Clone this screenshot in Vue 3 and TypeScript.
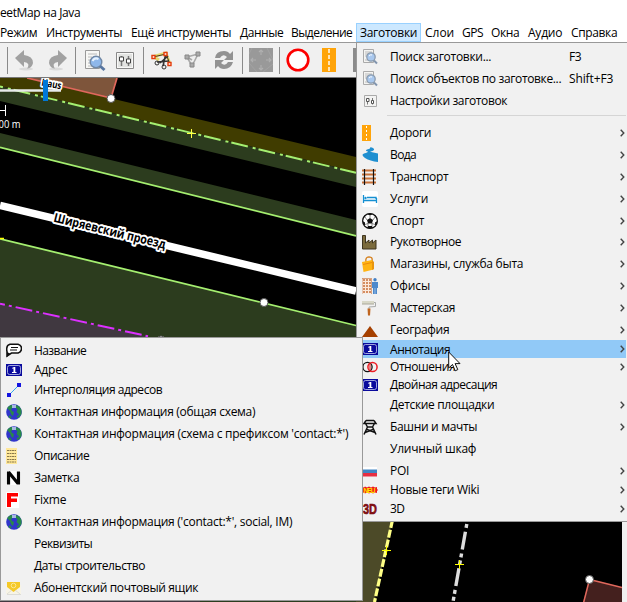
<script setup lang="ts">
type Item = { label: string; w: number; h: number; icon?: string; keys?: string; kw?: number; sub?: boolean; on?: boolean }

const bar = [
  { t: 'Режим', w: 37, gap: 9 }, { t: 'Инструменты', w: 76, gap: 9 }, { t: 'Ещё инструменты', w: 100, gap: 9 },
  { t: 'Данные', w: 43, gap: 8 }, { t: 'Выделение', w: 61, gap: 4 }, { t: 'Заготовки', w: 57, gap: 4, on: true },
  { t: 'Слои', w: 29, gap: 8 }, { t: 'GPS', w: 21, gap: 8 }, { t: 'Окна', w: 28, gap: 9 },
  { t: 'Аудио', w: 34, gap: 9 }, { t: 'Справка', w: 46, gap: 0 },
]
const top: Item[] = [
  { label: 'Поиск заготовки...', w: 101, h: 22, icon: 'find', keys: 'F3', kw: 12 },
  { label: 'Поиск объектов по заготовке...', w: 171, h: 22, icon: 'find', keys: 'Shift+F3', kw: 44 },
  { label: 'Настройки заготовок', w: 117, h: 22, icon: 'prefs' },
]
const presets: Item[] = [
  { label: 'Дороги', w: 41, h: 22, icon: 'road', sub: true },
  { label: 'Вода', w: 26, h: 22, icon: 'water', sub: true },
  { label: 'Транспорт', w: 58, h: 22, icon: 'rail', sub: true },
  { label: 'Услуги', w: 38, h: 22, icon: 'bed', sub: true },
  { label: 'Спорт', w: 34, h: 21, icon: 'ball', sub: true },
  { label: 'Рукотворное', w: 71, h: 22, icon: 'works', sub: true },
  { label: 'Магазины, служба быта', w: 133, h: 22, icon: 'shop', sub: true },
  { label: 'Офисы', w: 40, h: 22, icon: 'office', sub: true },
  { label: 'Мастерская', w: 65, h: 22, icon: 'roller', sub: true },
  { label: 'География', w: 59, h: 21, icon: 'peak', sub: true },
  { label: 'Аннотация', w: 60, h: 18, icon: 'addr', sub: true, on: true },
  { label: 'Отношения', w: 65, h: 18, icon: 'rel', sub: true },
  { label: 'Двойная адресация', w: 107, h: 18, icon: 'addr' },
  { label: 'Детские площадки', w: 104, h: 22, sub: true },
  { label: 'Башни и мачты', w: 87, h: 22, icon: 'tower', sub: true },
  { label: 'Уличный шкаф', w: 86, h: 22 },
  { label: 'POI', w: 19, h: 21, icon: 'flag', sub: true },
  { label: 'Новые теги Wiki', w: 89, h: 18, icon: 'neu', sub: true },
  { label: '3D', w: 14, h: 19, icon: 'three', sub: true },
]
const notes: Item[] = [
  { label: 'Название', w: 52, h: 21, icon: 'bubble' },
  { label: 'Адрес', w: 33, h: 18, icon: 'addr' },
  { label: 'Интерполяция адресов', w: 128, h: 22, icon: 'interp' },
  { label: 'Контактная информация (общая схема)', w: 221, h: 22, icon: 'globe' },
  { label: "Контактная информация (схема с префиксом 'contact:*')", w: 314, h: 22, icon: 'globe' },
  { label: 'Описание', w: 55, h: 22, icon: 'page' },
  { label: 'Заметка', w: 45, h: 22, icon: 'n' },
  { label: 'Fixme', w: 32, h: 22, icon: 'f' },
  { label: "Контактная информация ('contact:*', social, IM)", w: 258, h: 22, icon: 'globe' },
  { label: 'Реквизиты', w: 58, h: 22 },
  { label: 'Даты строительство', w: 111, h: 22 },
  { label: 'Абонентский почтовый ящик', w: 164, h: 22, icon: 'mail' },
]

// Tracks each label so that it takes the given width in pixels.
const vFit = {
  mounted(el: HTMLElement, b: { value: number }) {
    const n = (el.textContent || '').length
    const natural = el.getBoundingClientRect().width
    el.style.letterSpacing = ((b.value + 0.2 - natural) / n).toFixed(3) + 'px'
  },
}

const icons: Record<string, string> = {
  find: '<path d="M1.500 .5h10v13h-10z" fill="#f4f4f2" stroke="#aaa"/><path d="M3 3h7M3 5h3M3 7h2M3 11h3" stroke="#bbb"/><circle cx="9" cy="8" r="4.200" fill="#a9c8ee" stroke="#8a9aad" stroke-width="1.300"/><path d="M7 7q2-2 3-1" stroke="#fff" fill="none"/><path d="M12 11.500l3 3" stroke="#8295ae" stroke-width="2"/>',
  prefs: '<path d="M2.500 2.500h12v11h-12z" fill="#f3f3f2" stroke="#aaa"/><path d="M5.500 5v6.500M10.500 5v6.500" stroke="#777"/><path d="M4.500 5.500h2.500v3H4.500zM9.500 7.500h2v3h-2z" fill="#fff" stroke="#555"/>',
  road: '<path d="M0 0h9v16H0z" fill="#ffa40a"/><path d="M4.500 1v14" stroke="#fff" stroke-dasharray="2 2"/>',
  water: '<path d="M8 0Q12.500 1 12 3Q11 4.300 8 4.700L16 6.500V15Q8 14 3 11Q-1.500 8 2 6.500Q8 5 5 4.300Q3 3.500 5 2.500Q9.500 1.500 8 0Z" fill="#1f8fd0"/>',
  rail: '<path d="M0 1.500h14M0 5.500h14M0 9.500h14M0 13.500h14" stroke="#c87137" stroke-width="1.800"/><path d="M2.500 0v16M11.500 0v16" stroke="#111" stroke-width="1.200"/>',
  bed: '<rect width="16" height="16" rx="2" fill="#fff"/><path d="M1.500 4v8M14.500 7v5M1 9.500h14M5 6.500h9V8" stroke="#1590d2" stroke-width="1.300" fill="none"/><circle cx="3.500" cy="7" r="1.200" fill="#1590d2"/>',
  ball: '<circle cx="8" cy="8" r="7.400" fill="#fff" stroke="#111" stroke-width="1.200"/><path d="M8 5l3 2-1 3.500H6L5 7zM5 1l3 1.500L11 1 8 .3zM1 5l2-1L4 1.800 2 3zM15 5l-2-1-1-2.200L14 3zM.7 8l2.300 1.500v3L1 11zM15.300 8L13 9.500v3l2-1.500zM6 13h4l1 2-3 .800L5 15z" fill="#111"/><path d="M8 5V2.500M11 7l2-3M10 10.500l3 1M6 10.500l-3 1M5 7L3 4M6 10.500V13M10 10.500V13" stroke="#555" stroke-width=".700"/>',
  works: '<path d="M.5 15V1.500h3V9L7 6v3l3.500-3v3L14 6v9z" fill="#7b6b3d" stroke="#3e3520"/>',
  shop: '<path d="M4 6Q3 1 7 .800Q11 1 10 5" fill="none" stroke="#d47b13" stroke-width="1.300"/><path d="M0 6l10-2 1.500 9.500L1.500 16z" fill="#ffb413"/><path d="M10 4l2 2v7l-2 1M0 6l1.500 9" fill="#e8950f"/><path d="M1 8.500l9-2" stroke="#ef8a0b"/>',
  office: '<path d="M0 .5h9v15H0z" fill="#fbe9dc"/><path d="M1 2h8M1 5h8M1 8h8M1 11h8M1 14h8" stroke="#c86f38" stroke-width="1.700" stroke-dasharray="2 1"/><path d="M0 0v16M9.500 0v16M0 .5h9" stroke="#c98256" stroke-width=".700" fill="none"/><circle cx="13" cy="1.700" r="1.700" fill="#3f7fc6"/><path d="M10 4h6v6h-1v6h-4v-6h-1z" fill="#4d89cc"/><path d="M13 10v6" stroke="#cfe0f3" stroke-width=".600"/>',
  roller: '<path d="M0 1h12v3H0z" fill="#d8d8c8"/><path d="M0 4h12" stroke="#aaa89a"/><path d="M12 2.500h1.500v4L7 7v2" fill="none" stroke="#a8aaa9"/><path d="M5.500 8.500h3l-.500 7h-2z" fill="#c0651f"/>',
  peak: '<path d="M0 15L8 4l8 11z" fill="#a54000"/>',
  addr: '<path d="M0 2h16v12H0z" fill="#0a0a9c"/><rect x="1.500" y="3.500" width="13" height="9" rx="2" fill="none" stroke="#c5cbee" stroke-width=".800"/><path d="M6 6l2-1h1.300v5h1.200v1H6v-1h1.500V6.500H6z" fill="#fff"/>',
  rel: '<circle cx="5.500" cy="8" r="4.600" fill="none" stroke="#111" stroke-width="1.300"/><circle cx="10.500" cy="8" r="4.600" fill="none" stroke="#ec1c24" stroke-width="1.500"/><path d="M8 4.500v7" stroke="#d11"/>',
  tower: '<path d="M4 1.500h8M4 1.500L2 4.500h12L12 1.500M3.500 4.500L5.500 8M12.500 4.500L10.500 8M5 8h6M5.500 8L2 15.500M10.500 8L14 15.500M5 10.500l8 3M11 10.500l-8 3" fill="none" stroke="#111" stroke-width="1.500"/>',
  flag: '<path d="M0 4h15v3.500H0z" fill="#fff"/><path d="M1 6.500h14V10H1z" fill="#3f85c4"/><path d="M1 10h14v3.500H1z" fill="#e62e42"/>',
  neu: '<path d="M0 5l2 .500 1-1 2 1 2-1 2 1 2-1 2 1 2-.500v2l1 1-1 1v2l-2-.500-2 1-2-1-2 1-2-1-2 1-1-1-2 .500z" fill="#f01818"/><text x="1.500" y="10.500" font-family="Liberation Sans" font-size="6.500" font-weight="bold" fill="#ffe600" textLength="12">NEU</text>',
  three: '<text x="1" y="13" font-family="Liberation Sans" font-size="14" font-weight="bold" fill="#8d1015" stroke="#6e090c" stroke-width=".600" textLength="14" lengthAdjust="spacingAndGlyphs">3D</text>',
  bubble: '<path d="M4 1.200h8q3.500 1 3.500 4.300t-3.500 4.500H5.500L1 13V8.500Q.5 7 .8 5Q1 2 4 1.200z" fill="#fff" stroke="#111" stroke-width="1.600"/><path d="M1 9v5l3-3.500z" fill="#111"/><path d="M5 4.500h7M4 7h7" stroke="#111" stroke-width="1.200"/>',
  interp: '<path d="M3 13L13 3" stroke="#35a5ef"/><path d="M1 11h4v4H1zM11 1h4v4h-4z" fill="#1414e0"/>',
  globe: '<circle cx="8" cy="8" r="7.800" fill="#3035cb"/><path d="M1 4Q4 .5 6 1l1 3-2 1 1 2 2 1-1 4-2-2-1-3zM10 1q4 1 5.500 5v4l-2 3-1-3-2-2 1-3-2-1z" fill="#28894a"/><path d="M6 1h4v3H6z" fill="#c7d7ed" opacity=".8"/><path d="M3 12l2 2M11 13l2-1" stroke="#278748" stroke-width="2"/>',
  page: '<path d="M0 0h11v16H0z" fill="#ffe89b"/><path d="M1 2.500h9M1 5.500h9M1 8.500h9M1 11.500h9M1 14h9" stroke="#89784a" stroke-dasharray="2 .500"/>',
  n: '<path d="M0 1h15v14H0z" fill="#fff"/><path d="M2.500 14.500V1.500M2.500 2l9.500 11.500M12.500 14.500V1.500" stroke="#050505" stroke-width="3.200" fill="none"/>',
  f: '<path d="M0 0h13v16H0z" fill="#fff"/><path d="M1 1h11v3.500H5v2h6V10H5v5H1z" fill="#f00"/>',
  mail: '<path d="M0 5h15v9H0z" fill="#f7f4e6"/><path d="M1 2h13v5L7.500 12 1 7z" fill="#f5c927"/><circle cx="7.500" cy="5.500" r="2.300" fill="none" stroke="#fae798"/><path d="M1 14l5-4M14 14l-5-4M1 14.500h14" stroke="#d3d2cb" stroke-width=".700"/>',
}
</script>

<template>
  <div class="window">
    <header class="title"><span v-fit="80">eetMap на Java</span></header>
    <nav class="bar">
      <span v-for="b in bar" :key="b.t" class="cell" :class="{ open: b.on }" :style="{ width: b.w + 'px', marginRight: b.gap + 'px' }"><span v-fit="b.w">{{ b.t }}</span></span>
    </nav>
    <div class="tools">
      <i class="sep"></i>
      <svg viewBox="0 0 24 24"><path d="M3 10L12 2v5q9 1 9 8-1 5-6 6 4-6-3-7v5z" fill="#a1a1a1"/><ellipse cx="14" cy="21" rx="7" ry="1.500" fill="#ccc" opacity=".6"/></svg>
      <svg viewBox="0 0 24 24"><path d="M21 10L12 2v5q-9 1-9 8 1 5 6 6-4-6 3-7v5z" fill="#a1a1a1"/><ellipse cx="10" cy="21" rx="7" ry="1.500" fill="#ccc" opacity=".6"/></svg>
      <i class="sep"></i>
      <svg viewBox="0 0 24 24"><path d="M2.500 2.500h14v18h-14z" fill="#f7f7f5" stroke="#999"/><path d="M5 6h9M5 9h4M5 12h2M5 15h2M5 18h6" stroke="#bbb"/><circle cx="13" cy="14" r="5.800" fill="#8eb7ea" stroke="#7188a5" stroke-width="1.400"/><path d="M9.500 13q2-4 6-2" stroke="#e6f2ff" stroke-width="2" fill="none"/><path d="M17 18l4.500 4" stroke="#5876a0" stroke-width="3"/></svg>
      <svg viewBox="0 0 24 24"><path d="M3.500 4.500h17v16h-17z" fill="#f8f8f7" stroke="#888"/><path d="M5 6h14v13H5z" fill="#e3e4e2"/><path d="M8.500 8v10M15.500 8v10" stroke="#777" stroke-width="1.500"/><path d="M6.500 9h4v4h-4zM13.500 11h4v4h-4z" fill="#fff" stroke="#444"/></svg>
      <i class="sep"></i>
      <svg viewBox="0 0 24 24"><path d="M2 9L16 5l4 11M4 9l5 3" stroke="#e5d76e" stroke-width="3" fill="none"/><path d="M3 9L16 6l4 10" stroke="#493a26" fill="none"/><path d="M7 14l12-1M13 18L16 5M10 15L18 8" stroke="#333" stroke-width="1.600"/><circle cx="7" cy="15" r="2" fill="none" stroke="#333"/><circle cx="14" cy="19" r="2" fill="none" stroke="#333"/><path d="M2 7.500h3v3H2zM14 4.500h3v3h-3zM18 14.500h3v3h-3z" fill="#fff" stroke="#e43b0b" stroke-width="1.400"/></svg>
      <svg viewBox="0 0 24 24"><path d="M6 9L17 6 11 18 6 9M6 9l5 3" stroke="#aaa" stroke-width="1.600" fill="none"/><path d="M4 7h4v4H4zM15 4h4v4h-4zM9 15h4v4H9z" fill="#aaa" stroke="#888"/></svg>
      <svg viewBox="0 0 24 24"><path d="M3 10Q4 3 12 3q4 0 6 3l3-3v9h-9l3-3q-4-4-7 1zM3 21v-9h9l-3 3q4 4 7-1h5q-2 7-9 7-4 0-6-3z" fill="#929292"/></svg>
      <i class="sep"></i>
      <svg viewBox="0 0 24 24"><path d="M0 0h24v24H0z" fill="#999"/><path d="M3 0l-3 6M18 0l6 12M8 24l-8-9M14 24l10-8" stroke="#a3a3a3"/><path d="M12 2v5M10 4l2-2 2 2M12 22v-5M10 20l2 2 2-2M2 12h5M4 10l-2 2 2 2M22 12h-5M20 10l2 2-2 2" stroke="#b0b0b0" stroke-width="1.100" fill="none"/></svg>
      <i class="sep"></i>
      <svg viewBox="0 0 24 24"><circle cx="12" cy="12" r="10.300" fill="#fff" stroke="#fd0000" stroke-width="2.600"/></svg>
      <svg viewBox="0 0 24 24"><path d="M5 0h14v24H5z" fill="#ffa40a"/><path d="M12 1v22" stroke="#fff" stroke-width="1.400" stroke-dasharray="4 2"/></svg>
      <svg viewBox="0 0 24 24"><path d="M0 0h24v24H0z" fill="#8b8b8b"/></svg>
    </div>
    <main class="map">
      <svg width="622" height="524" viewBox="0 78 622 524">
        <path d="M0 78H26L356 157V172L0 86z" fill="#403c00"/>
        <path d="M0 86L356 172V187L0 101zM0 133L356 220V236L0 147z" fill="#2c3c1e"/>
        <path d="M0 239L356 325.500V602H0z" fill="#2c3c1e"/>
        <path d="M0 304L147 336.500 200 350V602H0z" fill="#403840"/>
        <path d="M27 78H117L111 98z" fill="#7e553b"/>
        <path d="M27 78L111 98 117 78" fill="none" stroke="#e0685c" stroke-width="1.700"/>
        <path d="M0 86.500L356 172.800" stroke="#a5ef70" stroke-width="2" stroke-dasharray="17 5 3 3" stroke-dashoffset="14"/>
        <path d="M0 147.300L356 235.800M0 238.800L356 325.500" stroke="#a5ef70" stroke-width="1.800"/>
        <path d="M0 205.500L356 291" stroke="#fff" stroke-width="7.500"/>
        <path d="M0 303.700L148 336.200" stroke="#dc30ff" stroke-width="2" stroke-dasharray="17 4 3 4" stroke-dashoffset="12"/>
        <path d="M0 238.500h4" stroke="#ff0" stroke-width="1.500"/>
        <text class="road" transform="translate(53 221.500) rotate(13.800)" textLength="115" lengthAdjust="spacingAndGlyphs">Ширяевский проезд</text>
        <text class="house" transform="translate(41 85.500) rotate(11)" textLength="20" lengthAdjust="spacingAndGlyphs">Haus</text>
        <path d="M0 90.500h61" stroke="#e7eaea" stroke-width="2.500"/>
        <path d="M43 80h5v21h-5z" fill="#0078d7"/>
        <path d="M0 110.500h5.500M5.500 105v11" stroke="#fff" fill="none"/>
        <text class="scale" x="-1.500" y="128" textLength="22" lengthAdjust="spacingAndGlyphs">00&nbsp;m</text>
        <path d="M187 133.500h9M191.500 129v9" stroke="#ff4"/>
        <circle cx="111" cy="98.500" r="4" class="node"/><circle cx="264" cy="302.500" r="4" class="node"/><circle cx="161" cy="340" r="4" class="node"/>
        <path d="M356 520H392.500L374.500 602H356z" fill="#4c4a28"/>
        <path d="M392.500 520L374.500 602" stroke="#ffff86" stroke-width="3.200" stroke-dasharray="8 2"/>
        <path d="M467.500 520L453 602" stroke="#ddd" stroke-width="3.400" stroke-dasharray="4 4 18 4 4 3" stroke-dashoffset="-4"/>
        <path d="M382 550.500h9M386.500 546v9M455 564.500h9M459.500 560v9" stroke="#ff0"/>
        <path d="M589.500 579.500L622 587.500V602H583z" fill="#44201e"/><path d="M583.500 603L589.500 579.500 622 587.500" fill="none" stroke="#e0685c" stroke-width="1.500"/>
        <circle cx="589.500" cy="579.500" r="4" class="node"/>
      </svg>
    </main>

    <section class="menu presets">
      <div v-for="i in top" :key="i.label" class="row" :style="{ height: i.h + 'px' }">
        <svg class="ico" viewBox="0 0 16 16" v-html="icons[i.icon || '']"></svg>
        <span class="lab"><span v-fit="i.w">{{ i.label }}</span></span>
        <span v-if="i.keys" class="keys"><span v-fit="i.kw">{{ i.keys }}</span></span>
      </div>
      <hr />
      <div v-for="i in presets" :key="i.label" class="row" :class="{ on: i.on }" :style="{ height: i.h + 'px' }">
        <svg class="ico" viewBox="0 0 16 16" v-html="icons[i.icon || ''] || ''"></svg>
        <span class="lab"><span v-fit="i.w">{{ i.label }}</span></span>
        <svg v-if="i.sub" class="arrow" viewBox="0 0 5 8"><path d="M.7 .7L3.800 4 .7 7.300" fill="none" stroke="#444" stroke-width="1.400"/></svg>
      </div>
    </section>

    <section class="menu notes">
      <div v-for="i in notes" :key="i.label" class="row" :style="{ height: i.h + 'px' }">
        <svg class="ico" viewBox="0 0 16 16" v-html="icons[i.icon || ''] || ''"></svg>
        <span class="lab"><span v-fit="i.w">{{ i.label }}</span></span>
      </div>
    </section>

    <svg class="cursor" viewBox="0 0 13 21"><path d="M.7 1v16l3.800-3.500 2.700 6.300 2.600-1.200-2.700-6H12z" fill="#fff" stroke="#111"/></svg>
  </div>
</template>

<style>
body { overflow: hidden; background: #f0f0f0; }
</style>
<style scoped>
.window { position: relative; width: 627px; height: 602px; overflow: hidden; display: flex; flex-direction: column; background: #f0f0f0; color: #000; font: 12px/16px "Open Sans", "Noto Sans", sans-serif; white-space: pre; }
.title { height: 23px; padding-top: 5px; box-sizing: border-box; background: #fff; }
.bar { display: flex; height: 20px; box-sizing: border-box; background: #fff; border-bottom: 1px solid #999; line-height: 20px; }
.cell { flex: none; box-sizing: border-box; }
.cell.open { box-sizing: content-box; padding: 0 4px; background: #cce8ff; box-shadow: inset 0 0 0 1px #99d1ff; }
.tools { flex: none; display: grid; grid-template-columns: 5px 34px 29px 8px 30px 30px 7px 31px 31px 30px 7px 30px 7px 31px 36px 24px; height: 35px; padding: 5px 0 0 7px; box-sizing: border-box; border-bottom: 1px solid #777; background: #f0f0f0; }
.tools svg { width: 24px; height: 24px; }
.sep { width: 1px; height: 27px; margin-top: -1px; background: #8a8a8a; }
.map { flex: none; width: 622px; height: 524px; background: #000; }
.map svg { display: block; }
.road { font: bold 12.5px "Open Sans", sans-serif; fill: #000; stroke: #fff; stroke-width: 4px; paint-order: stroke; stroke-linejoin: round; }
.house { font: bold 10px "Open Sans", sans-serif; fill: #000; stroke: #fff; stroke-width: 4px; paint-order: stroke; stroke-linejoin: round; }
.scale { font: 10.5px "Open Sans", sans-serif; fill: #fff; }
.node { fill: #fff; stroke: #555; stroke-width: 1px; }
.menu { position: absolute; box-sizing: border-box; background: #f1f1f1; border: 1px solid #999; }
.presets { left: 356px; top: 43px; width: 272px; height: 479px; border-top: 0; padding-top: 3px; }
.notes { left: 0; top: 337px; width: 363px; height: 264px; padding-top: 2px; }
.row { display: flex; align-items: center; box-sizing: border-box; padding-left: 5px; margin-right: 1px; }
.row.on { background: #91c9f7; }
.row.on .lab { padding-top: 1px; }
.ico { flex: none; width: 16px; height: 16px; margin-right: 12px; }
.lab { width: 179px; flex: none; }
.notes .lab { width: 320px; }
.arrow { width: 5px; height: 8px; margin-left: 51px; }
hr { height: 1px; margin: 3px 1px 6px 30px; border: 0; background: #d5d5d5; }
.cursor { position: absolute; left: 448px; top: 351px; width: 13px; height: 21px; }
</style>
